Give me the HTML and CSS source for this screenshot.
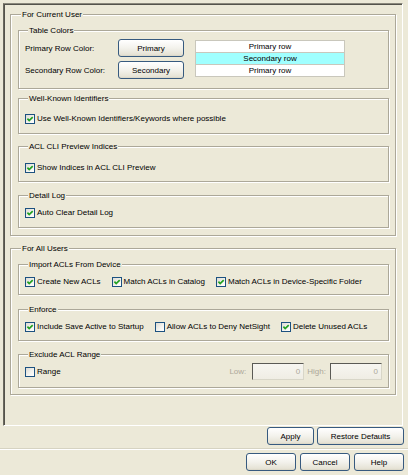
FILE: index.html
```html
<!DOCTYPE html>
<html>
<head>
<meta charset="utf-8">
<link rel="stylesheet" href="styles.css">
</head>
<body>
<div class="panel">
  <div class="group fcu">
    <div class="legend">For Current User</div>
    <div class="group tc">
      <div class="legend">Table Colors</div>
      <div class="tc-grid">
        <span class="lbl">Primary Row Color:</span>
        <button class="btn">Primary</button>
        <div class="preview">
          <div class="prow">Primary row</div>
          <div class="prow sec">Secondary row</div>
          <div class="prow">Primary row</div>
        </div>
        <span class="lbl">Secondary Row Color:</span>
        <button class="btn">Secondary</button>
      </div>
    </div>
    <div class="group wk">
      <div class="legend">Well-Known Identifiers</div>
      <div class="checks">
        <label class="chk"><span class="box"><svg viewBox="0 0 8 8" width="8" height="8"><path d="M1.4 3.7 L3.2 5.6 L6.7 2.1" fill="none" stroke="#21a121" stroke-width="1.7"/></svg></span>Use Well-Known Identifiers/Keywords where possible</label>
      </div>
    </div>
    <div class="group acl">
      <div class="legend">ACL CLI Preview Indices</div>
      <div class="checks">
        <label class="chk"><span class="box"><svg viewBox="0 0 8 8" width="8" height="8"><path d="M1.4 3.7 L3.2 5.6 L6.7 2.1" fill="none" stroke="#21a121" stroke-width="1.7"/></svg></span>Show Indices in ACL CLI Preview</label>
      </div>
    </div>
    <div class="group dlog">
      <div class="legend">Detail Log</div>
      <div class="checks">
        <label class="chk"><span class="box"><svg viewBox="0 0 8 8" width="8" height="8"><path d="M1.4 3.7 L3.2 5.6 L6.7 2.1" fill="none" stroke="#21a121" stroke-width="1.7"/></svg></span>Auto Clear Detail Log</label>
      </div>
    </div>
  </div>

  <div class="group fau">
    <div class="legend">For All Users</div>
    <div class="group imp">
      <div class="legend">Import ACLs From Device</div>
      <div class="checks">
        <label class="chk"><span class="box"><svg viewBox="0 0 8 8" width="8" height="8"><path d="M1.4 3.7 L3.2 5.6 L6.7 2.1" fill="none" stroke="#21a121" stroke-width="1.7"/></svg></span>Create New ACLs</label>
        <label class="chk"><span class="box"><svg viewBox="0 0 8 8" width="8" height="8"><path d="M1.4 3.7 L3.2 5.6 L6.7 2.1" fill="none" stroke="#21a121" stroke-width="1.7"/></svg></span>Match ACLs in Catalog</label>
        <label class="chk"><span class="box"><svg viewBox="0 0 8 8" width="8" height="8"><path d="M1.4 3.7 L3.2 5.6 L6.7 2.1" fill="none" stroke="#21a121" stroke-width="1.7"/></svg></span>Match ACLs in Device-Specific Folder</label>
      </div>
    </div>
    <div class="group enf">
      <div class="legend">Enforce</div>
      <div class="checks">
        <label class="chk"><span class="box"><svg viewBox="0 0 8 8" width="8" height="8"><path d="M1.4 3.7 L3.2 5.6 L6.7 2.1" fill="none" stroke="#21a121" stroke-width="1.7"/></svg></span>Include Save Active to Startup</label>
        <label class="chk"><span class="box"></span>Allow ACLs to Deny NetSight</label>
        <label class="chk"><span class="box"><svg viewBox="0 0 8 8" width="8" height="8"><path d="M1.4 3.7 L3.2 5.6 L6.7 2.1" fill="none" stroke="#21a121" stroke-width="1.7"/></svg></span>Delete Unused ACLs</label>
      </div>
    </div>
    <div class="group exc">
      <div class="legend">Exclude ACL Range</div>
      <div class="range-row">
        <label class="chk"><span class="box"></span>Range</label>
        <span class="dis-lbl low">Low:</span>
        <span class="field">0</span>
        <span class="dis-lbl high">High:</span>
        <span class="field">0</span>
      </div>
    </div>
  </div>
</div>

<div class="btn-row apply-row">
  <button class="btn apply">Apply</button>
  <button class="btn restore">Restore Defaults</button>
</div>
<div class="sep"></div>
<div class="btn-row ok-row">
  <button class="btn dlg">OK</button>
  <button class="btn dlg">Cancel</button>
  <button class="btn dlg">Help</button>
</div>
</body>
</html>
```

FILE: styles.css
```css
* { box-sizing: border-box; }

body {
  margin: 0;
  width: 408px;
  height: 475px;
  overflow: hidden;
  background: #ece9d8;
  font-family: "Liberation Sans", Arial, sans-serif;
  font-size: 8px;
  color: #000;
}

.panel {
  margin: 3px 0 0 3px;
  width: 400px;
  height: 423px;
  border: 1px solid;
  border-color: #8a887c #fff #fff #6a685e;
  box-shadow: inset 1px 1px 0 #54534c;
  padding: 10px 6px 0 6px;
}

.group {
  border: 1px solid #aca899;
  box-shadow: 1px 1px 0 #fff, inset 1px 1px 0 #fff;
}

.legend {
  width: fit-content;
  height: 11px;
  line-height: 11px;
  margin: -6px 0 0 3px;
  padding: 0 1px;
  background: #ece9d8;
  white-space: nowrap;
}

/* For Current User */
.fcu { padding: 0 6px 7px 7px; }
.tc { margin-top: 10px; padding: 0 6px 9px 6px; }
.tc-grid {
  margin-top: 3px;
  display: grid;
  grid-template-columns: 82px 66px 150px;
  grid-template-rows: 18px 18px;
  column-gap: 11px;
  row-gap: 4px;
  align-items: center;
}
.lbl { white-space: nowrap; }

.preview {
  grid-column: 3;
  grid-row: 1 / span 2;
  align-self: start;
  margin-top: 1px;
  border: 1px solid #c9c7bc;
  background: #fff;
}
.prow {
  height: 11px;
  line-height: 11px;
  text-align: center;
}
.prow + .prow { border-top: 1px solid #c9c7bc; height: 12px; }
.prow.sec { background: #a0ffff; }

.wk { margin-top: 9px; padding: 0 6px 9px 6px; }
.wk .checks { margin-top: 10px; }
.acl { margin-top: 12px; padding: 0 6px 8px 6px; }
.acl .checks { margin-top: 11px; }
.dlog { margin-top: 13px; padding: 0 6px 9px 6px; }
.dlog .checks { margin-top: 7px; }

/* For All Users */
.fau { margin-top: 12px; padding: 0 6px 6px 7px; }
.imp { margin-top: 10px; padding: 0 6px 7px 6px; }
.imp .checks { margin-top: 7px; }
.enf { margin-top: 14px; padding: 0 6px 8px 6px; }
.enf .checks { margin-top: 7px; }
.exc { margin-top: 13px; padding: 0 6px 7px 6px; }

.checks {
  display: flex;
  gap: 11px;
  height: 10px;
}

.chk {
  display: flex;
  align-items: center;
  height: 10px;
  line-height: 10px;
  white-space: nowrap;
}

.box {
  width: 10px;
  height: 10px;
  margin-right: 2px;
  border: 1px solid #1c5180;
  background: linear-gradient(135deg, #dcdbd4 0%, #f4f4f0 60%, #fff 100%);
  display: flex;
  flex: none;
}
.box svg { display: block; }

.range-row {
  margin-top: 3px;
  height: 17px;
  display: flex;
  align-items: center;
}
.dis-lbl { color: #aca899; }
.low { margin-left: auto; margin-right: 6px; }
.high { margin-left: 3px; margin-right: 4px; }
.field {
  width: 52px;
  height: 17px;
  line-height: 15px;
  text-align: right;
  padding-right: 3px;
  color: #aca899;
  border: 1px solid;
  border-color: #5a5a55 #d8d6c8 #d8d6c8 #5a5a55;
  background: linear-gradient(#f7f6f1, #efede4);
}

/* Buttons */
.btn {
  font-family: inherit;
  font-size: 8px;
  color: #000;
  height: 18px;
  padding: 0;
  border: 1px solid #375a7f;
  border-radius: 3px;
  background: linear-gradient(#ffffff 0%, #f3f2ec 50%, #e6e3d6 90%, #d8d4c4 100%);
  white-space: nowrap;
}

.btn-row {
  display: flex;
  justify-content: flex-end;
  padding-right: 4px;
}
.apply-row { margin-top: 1px; gap: 3px; }
.apply { width: 47px; }
.restore { width: 87px; }

.sep {
  margin-top: 3px;
  height: 2px;
  border-top: 1px solid #d6d3c2;
  border-bottom: 1px solid #fff;
}

.ok-row { margin-top: 3px; gap: 4px; }
.dlg { width: 50px; }
```
